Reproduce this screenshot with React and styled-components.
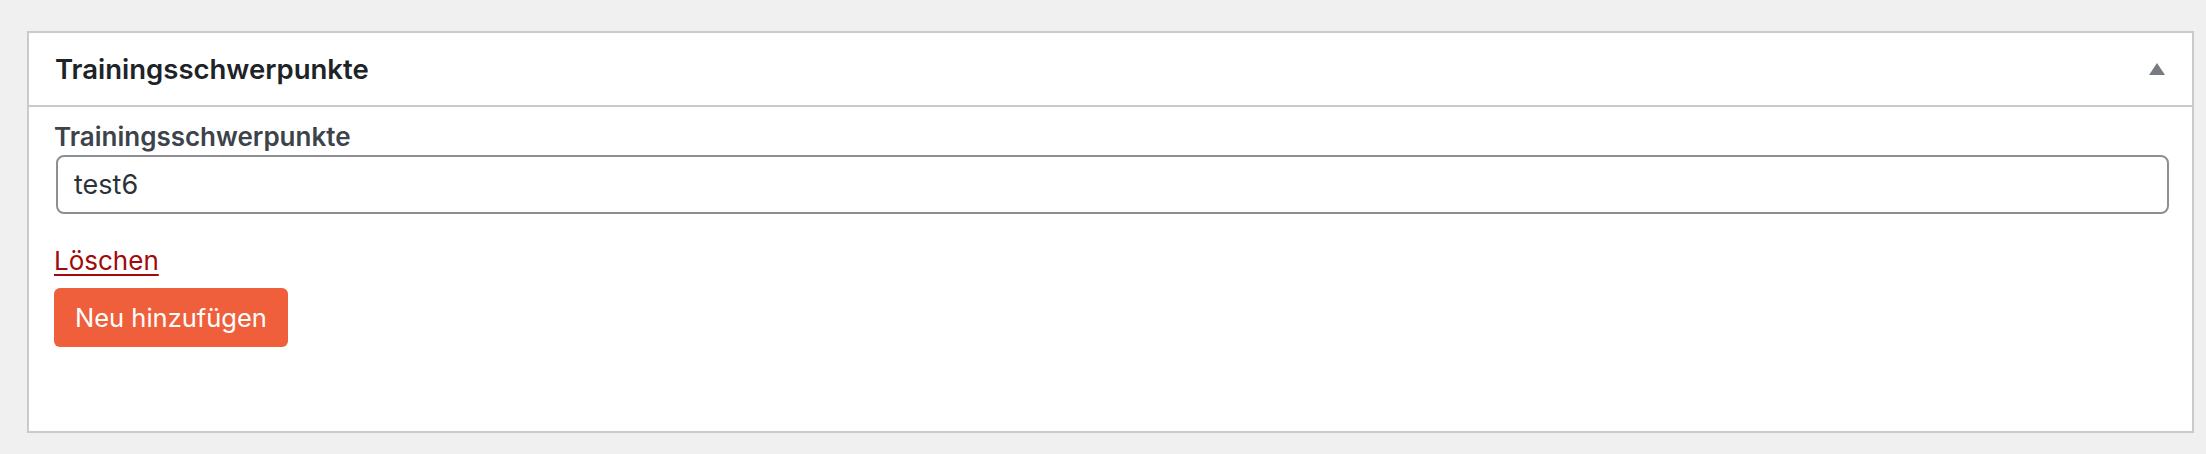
import React from "react";
import styled, { createGlobalStyle } from "styled-components";

const GlobalStyle = createGlobalStyle`
  html, body {
    margin: 0;
    padding: 0;
    background: #f0f0f1;
  }
  body {
    font-family: Inter, "Noto Sans", "Liberation Sans", sans-serif;
  }
`;

const Page = styled.div`
  padding: 31px 12px 20px 27px;
`;

const Postbox = styled.section`
  background: #ffffff;
  border: 2px solid #c9cacd;
  display: flex;
  flex-direction: column;
  height: 402px;
  box-sizing: border-box;
`;

const Kopf = styled.header`
  height: 72px;
  display: flex;
  align-items: center;
  justify-content: space-between;
  padding: 0 27px 0 26px;
  border-bottom: 2px solid #c9cacd;
`;

const Titel = styled.h2`
  margin: 0;
  font-size: 27.5px;
  font-weight: 600;
  color: #1d2327;
`;

const Pfeil = styled.button`
  border: 0;
  background: none;
  padding: 0;
  width: 16px;
  height: 12px;
  display: flex;
  cursor: pointer;
`;

const Inhalt = styled.div`
  display: flex;
  flex-direction: column;
  align-items: flex-start;
  padding: 14px 23px 0 25px;
`;

const Beschriftung = styled.label`
  font-size: 26px;
  font-weight: 600;
  color: #3c434a;
  line-height: 32px;
  margin-bottom: 2px;
`;

const Eingabe = styled.input`
  align-self: stretch;
  margin-left: 2px;
  height: 59px;
  box-sizing: border-box;
  border: 2px solid #8c8f94;
  border-radius: 8px;
  padding: 0 16px;
  font-family: inherit;
  font-size: 27px;
  color: #2c3338;
  outline: none;
`;

const Loeschen = styled.a`
  margin-top: 31px;
  font-size: 26px;
  color: #a00a0a;
  text-decoration: underline;
  text-decoration-thickness: 2px;
  text-underline-offset: 4px;
  line-height: 32px;
  cursor: pointer;
`;

const Knopf = styled.button`
  margin-top: 11px;
  height: 59px;
  padding: 0 21px;
  background: #ef5f3b;
  color: #ffffff;
  border: 0;
  border-radius: 6px;
  font-family: inherit;
  font-size: 25.5px;
  cursor: pointer;
`;

export default function App() {
  return (
    <Page>
      <GlobalStyle />
      <Postbox>
        <Kopf>
          <Titel>Trainingsschwerpunkte</Titel>
          <Pfeil aria-label="Schließen">
            <svg width="16" height="12" viewBox="0 0 16 12">
              <polygon points="8,0 16,12 0,12" fill="#787c82" />
            </svg>
          </Pfeil>
        </Kopf>
        <Inhalt>
          <Beschriftung htmlFor="schwerpunkt">Trainingsschwerpunkte</Beschriftung>
          <Eingabe id="schwerpunkt" defaultValue="test6" />
          <Loeschen>Löschen</Loeschen>
          <Knopf>Neu hinzufügen</Knopf>
        </Inhalt>
      </Postbox>
    </Page>
  );
}
